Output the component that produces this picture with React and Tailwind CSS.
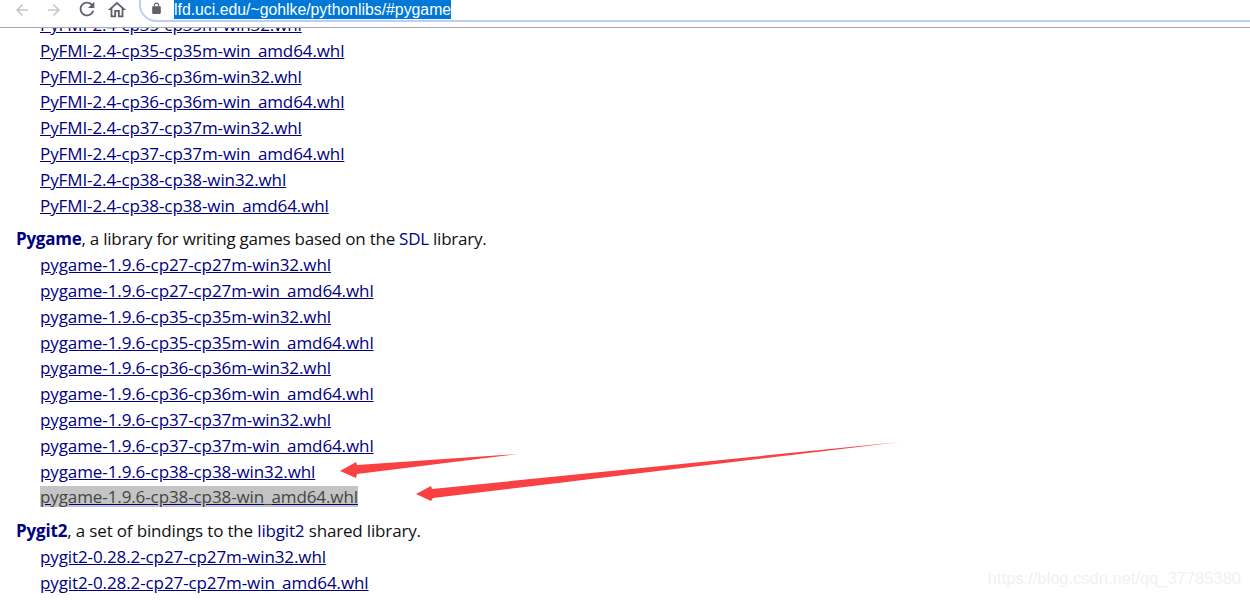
import React from 'react';

const pyfmi = [
  'PyFMI-2.4-cp35-cp35m-win32.whl',
  'PyFMI-2.4-cp35-cp35m-win_amd64.whl',
  'PyFMI-2.4-cp36-cp36m-win32.whl',
  'PyFMI-2.4-cp36-cp36m-win_amd64.whl',
  'PyFMI-2.4-cp37-cp37m-win32.whl',
  'PyFMI-2.4-cp37-cp37m-win_amd64.whl',
  'PyFMI-2.4-cp38-cp38-win32.whl',
  'PyFMI-2.4-cp38-cp38-win_amd64.whl',
];

const pygame = [
  'pygame-1.9.6-cp27-cp27m-win32.whl',
  'pygame-1.9.6-cp27-cp27m-win_amd64.whl',
  'pygame-1.9.6-cp35-cp35m-win32.whl',
  'pygame-1.9.6-cp35-cp35m-win_amd64.whl',
  'pygame-1.9.6-cp36-cp36m-win32.whl',
  'pygame-1.9.6-cp36-cp36m-win_amd64.whl',
  'pygame-1.9.6-cp37-cp37m-win32.whl',
  'pygame-1.9.6-cp37-cp37m-win_amd64.whl',
  'pygame-1.9.6-cp38-cp38-win32.whl',
  'pygame-1.9.6-cp38-cp38-win_amd64.whl',
];

const pygit = ['pygit2-0.28.2-cp27-cp27m-win32.whl', 'pygit2-0.28.2-cp27-cp27m-win_amd64.whl'];

const Icon = ({ d, className, fillRule }) => (
  <svg viewBox="0 0 24 24" className={className} fill="currentColor">
    <path d={d} fillRule={fillRule} />
  </svg>
);

const FileList = ({ files, selected }) => (
  <ul className="ml-[40px]">
    {files.map((name) => (
      <li key={name} className="h-[25.85px] leading-[25.85px]">
        <a className={`text-[#000080] underline ${name === selected ? 'bg-[#c4c4c4] text-[#444444] decoration-[#000080] inline-block align-top mt-[1.4px] leading-[21px]' : ''}`}>
          {name}
        </a>
      </li>
    ))}
  </ul>
);

const App = () => {
  return (
    <div className="relative w-[1250px] h-[600px] overflow-hidden bg-white font-['Open_Sans','Noto_Sans',sans-serif] text-[17px] tracking-[-0.1px] text-[#111111]">
      <div className="relative z-10 h-[28px] flex items-start bg-white border-b border-[#a9a9a9]">
        <Icon className="ml-[13px] mt-[1px] w-[18px] h-[18px] text-[#c4c4c4]" d="M20 11H7.83l5.59-5.59L12 4l-8 8 8 8 1.41-1.41L7.83 13H20v-2z" />
        <Icon className="ml-[14px] mt-[1px] w-[18px] h-[18px] text-[#c4c4c4]" d="M12 4l-1.41 1.41L16.17 11H4v2h12.17l-5.58 5.59L12 20l8-8z" />
        <Icon className="ml-[13px] mt-[-2px] w-[22px] h-[22px] text-[#5f6368]" d="M17.65 6.35C16.2 4.9 14.21 4 12 4c-4.42 0-7.99 3.58-7.99 8s3.57 8 7.99 8c3.73 0 6.84-2.55 7.73-6h-2.08c-.82 2.33-3.04 4-5.65 4-3.31 0-6-2.69-6-6s2.69-6 6-6c1.66 0 3.14.69 4.22 1.78L13 11h7V4l-2.35 2.35z" />
        <Icon className="ml-[8px] mt-[-1px] w-[22px] h-[22px] text-[#5f6368]" d="M12 5.69l5 4.5V18h-2v-6H9v6H7v-7.81l5-4.5M12 3L2 12h3v8h6v-6h2v6h6v-8h3L12 3z" />
        <div className="ml-[11px] flex items-end h-[34px] -mt-[12px] pl-[9px] flex-1 rounded-bl-[17px] border-l-2 border-b-2 border-[#bcd0f5]">
          <Icon className="w-[13px] h-[13px] mb-[5px] text-[#5f6368]" fillRule="evenodd" d="M18 8h-1V6c0-2.76-2.24-5-5-5S7 3.24 7 6v2H6c-1.1 0-2 .9-2 2v10c0 1.1.9 2 2 2h12c1.1 0 2-.9 2-2V10c0-1.1-.9-2-2-2zM9 8V6c0-1.66 1.34-3 3-3s3 1.34 3 3v2H9z" />
          <span className="ml-[11px] mb-[1px] bg-[#0078d7] text-white font-['Liberation_Sans',sans-serif] text-[15.8px] tracking-normal leading-[19px]">
            lfd.uci.edu/~gohlke/pythonlibs/#pygame
          </span>
        </div>
      </div>

      <div className="-mt-[16.2px]">
        <FileList files={pyfmi} />
        <p className="ml-[16px] mt-[7.6px] h-[25.85px] leading-[25.85px] tracking-[-0.25px]">
          <a className="font-bold text-[#000080]">Pygame</a>, a library for writing games based on the <a className="text-[#000080]">SDL</a> library.
        </p>
        <FileList files={pygame} selected="pygame-1.9.6-cp38-cp38-win_amd64.whl" />
        <p className="ml-[16px] mt-[7.6px] h-[25.85px] leading-[25.85px] tracking-[-0.16px]">
          <a className="font-bold text-[#000080]">Pygit2</a>, a set of bindings to the <a className="text-[#000080]">libgit2</a> shared library.
        </p>
        <FileList files={pygit} />
      </div>

      {/* red annotation arrows */}
      <svg className="absolute left-0 top-0 pointer-events-none" width="1250" height="600" viewBox="0 0 1250 600">
        <polygon points="518,454 357,465 356,462 340,471 356,478 357,474" fill="#f94144" />
        <polygon points="900,442 432,489 431,486 416,494 431,501 433,498" fill="#f94144" />
      </svg>

      <span className="absolute right-[9px] bottom-[9px] font-['Liberation_Sans',sans-serif] text-[16.5px] tracking-normal text-[#f1f1f1]">
        https://blog.csdn.net/qq_37785380
      </span>
    </div>
  );
};

export default App;
